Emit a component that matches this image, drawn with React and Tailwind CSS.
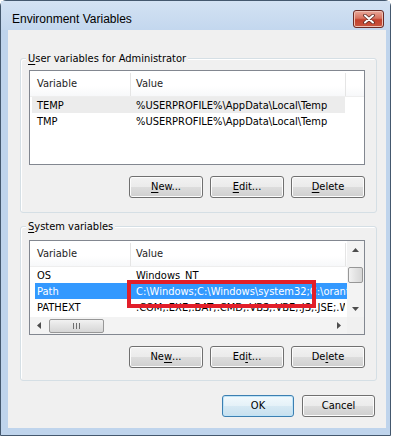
import React from 'react';

const UI_FONT = "font-['DejaVu_Sans_Condensed','Liberation_Sans',sans-serif] text-[11px]";

function Mn({ children }) {
  return <span className="underline decoration-1 underline-offset-[2px]">{children}</span>;
}

function Button({ children, isDefault, width = 'w-[74px]' }) {
  return (
    <div
      className={
        isDefault
          ? `${width} flex h-[22px] items-center justify-center rounded-[3px] border border-[#3c7fb1] bg-[linear-gradient(#f2f9fd,#e4f1f8_50%,#d6e9f4_50%,#c8e0ee)] text-black shadow-[inset_0_0_0_1px_#bfe3f7]`
          : `${width} flex h-[22px] items-center justify-center rounded-[3px] border border-[#707070] bg-[linear-gradient(#f2f2f2,#ebebeb_50%,#dddddd_50%,#cfcfcf)] text-black shadow-[inset_0_0_0_1px_#fcfcfc]`
      }
    >
      {children}
    </div>
  );
}

function Arrow({ dir }) {
  const pts = {
    up: '0,4 7,4 3.5,0',
    down: '0,0 7,0 3.5,4',
    left: '4,0 4,7 0,3.5',
    right: '0,0 0,7 4,3.5',
  }[dir];
  const vertical = dir === 'up' || dir === 'down';
  return (
    <svg width={vertical ? 7 : 4} height={vertical ? 4 : 7} viewBox={vertical ? '0 0 7 4' : '0 0 4 7'}>
      <polygon points={pts} fill="#4d4d4d" />
    </svg>
  );
}

function Header({ filler }) {
  return (
    <div className="flex h-[26px] shrink-0 items-center border-b border-[#eeeeee] bg-[linear-gradient(#ffffff,#ffffff_60%,#f7f8fa)] pt-[2px] text-[#1e1e1e]">
      <div className="w-[100px] pl-[7px]">Variable</div>
      <div className="h-full w-px bg-[#e5e5e5]" />
      <div className="w-[214px] pl-[5px]">Value</div>
      <div className="h-full w-px bg-[#e5e5e5]" />
      {filler && <div className="flex-1" />}
    </div>
  );
}

function Row({ name, value, state }) {
  const bg =
    state === 'selected'
      ? 'ml-[5px] bg-[#3399ff] text-white'
      : state === 'hover'
        ? 'ml-[2px] bg-[#ececec] text-black'
        : 'ml-[2px] text-black';
  return (
    <div className="flex h-[16px] shrink-0">
      <div className={`flex w-[313px] items-center overflow-hidden whitespace-nowrap pt-[2px] ${bg}`}>
        <div className={state === 'selected' ? 'w-[95px] shrink-0 pl-[2px]' : 'w-[98px] shrink-0 pl-[5px]'}>{name}</div>
        <div className="shrink-0 pl-[6px]">{value}</div>
      </div>
    </div>
  );
}

function UserList() {
  return (
    <div className="flex h-[95px] w-[336px] flex-col overflow-hidden border border-[#828790] bg-white">
      <Header filler />
      <Row name="TEMP" value="%USERPROFILE%\AppData\Local\Temp" state="hover" />
      <Row name="TMP" value="%USERPROFILE%\AppData\Local\Temp" />
    </div>
  );
}

function SystemList() {
  return (
    <div className="relative flex h-[95px] w-[336px] flex-col overflow-hidden border border-[#828790] bg-white">
      <div className="flex min-h-0 flex-1">
        <div className="flex min-w-0 flex-1 flex-col overflow-hidden">
          <Header />
          <Row name="OS" value="Windows_NT" />
          <Row name="Path" value="C:\Windows;C:\Windows\system32;C:\orant\bin;C:\Windows\System32\Wbem" state="selected" />
          <Row name="PATHEXT" value=".COM;.EXE;.BAT;.CMD;.VBS;.VBE;.JS;.JSE;.WSF;.WSH;.MSC" />
        </div>
        {/* vertical scrollbar */}
        <div className="flex w-[17px] shrink-0 flex-col items-center bg-[#f3f3f3]">
          <div className="flex h-[17px] w-full items-center justify-center">
            <Arrow dir="up" />
          </div>
          <div className="mt-[9px] h-[16px] w-[15px] rounded-[2px] border border-[#979797] bg-[linear-gradient(90deg,#f2f2f2,#e3e3e3_50%,#d6d6d6)]" />
          <div className="flex-1" />
          <div className="flex h-[17px] w-full items-center justify-center">
            <Arrow dir="down" />
          </div>
        </div>
      </div>
      {/* horizontal scrollbar */}
      <div className="flex h-[17px] shrink-0">
        <div className="flex flex-1 items-center bg-[#f3f3f3]">
          <div className="flex h-full w-[17px] items-center justify-center">
            <Arrow dir="left" />
          </div>
          <div className="ml-[2px] flex h-[14px] w-[55px] items-center justify-center rounded-[2px] border border-[#979797] bg-[linear-gradient(#f2f2f2,#e3e3e3_50%,#d6d6d6)]">
            <svg width="7" height="6" viewBox="0 0 7 6">
              <path d="M0.5 0v6M3.5 0v6M6.5 0v6" stroke="#6f6f6f" strokeWidth="1" />
            </svg>
          </div>
          <div className="flex-1" />
          <div className="flex h-full w-[17px] items-center justify-center">
            <Arrow dir="right" />
          </div>
        </div>
        <div className="w-[17px] bg-[#f0f0f0]" />
      </div>
      {/* annotation box */}
      <div className="absolute left-[97px] top-[39px] h-[28px] w-[189px] border-[4px] border-[#e21f2a]" />
    </div>
  );
}

function Group({ label, children, pt, pb }) {
  return (
    <div className={`relative w-[357px] rounded-[3px] border border-[#d5dfe5] pl-[8px] pr-[11px] shadow-[inset_1px_1px_0_#ffffff] ${pt} ${pb}`}>
      <span className="absolute left-[5px] top-[-7px] bg-[#f0f0f0] px-[2px] leading-[13px] text-black">{label}</span>
      {children}
    </div>
  );
}

export default function App() {
  return (
    <div className={`h-[436px] w-[394px] bg-white ${UI_FONT}`}>
      <div className="flex h-[436px] w-[391px] flex-col rounded-t-[6px] border-x border-b border-t border-[#44586e] bg-[#bfd4ec]">
        {/* title bar */}
        <div className="flex h-[29px] shrink-0 items-start justify-between bg-[linear-gradient(#d3e2f3,#c3d7ee)] pl-[11px] pr-[6px]">
          <span className="mt-[11px] font-['Liberation_Sans',sans-serif] text-[12px] leading-[14px] text-black">Environment Variables</span>
          <div className="mt-[9px] flex h-[18px] w-[31px] items-center justify-center rounded-[3px] border border-[#6b2a24] bg-[linear-gradient(#e9a99b,#d7735f_45%,#c2402c_55%,#c9563f)] shadow-[inset_0_0_0_1px_#eec0b4]">
            <svg width="12" height="10" viewBox="0 0 12 10">
              <path d="M2 1.5l8 7M10 1.5l-8 7" stroke="#5a2a24" strokeWidth="3.6" strokeLinecap="round" />
              <path d="M2 1.5l8 7M10 1.5l-8 7" stroke="#ffffff" strokeWidth="2" strokeLinecap="round" />
            </svg>
          </div>
        </div>

        {/* client area */}
        <div className="ml-[7px] flex h-[398px] w-[378px] shrink-0 flex-col bg-[#f0f0f0] pl-[12px]">
          <div className="mt-[28px]">
            <Group
              label={<><Mn>U</Mn>ser variables for Administrator</>}
              pt="pt-[11px]"
              pb="pb-[14px]"
            >
              <UserList />
              <div className="mt-[11px] flex justify-end gap-[7px]">
                <Button><Mn>N</Mn>ew...</Button>
                <Button><Mn>E</Mn>dit...</Button>
                <Button><Mn>D</Mn>elete</Button>
              </div>
            </Group>
          </div>

          <div className="mt-[13px]">
            <Group label={<><Mn>S</Mn>ystem variables</>} pt="pt-[13px]" pb="pb-[12px]">
              <SystemList />
              <div className="mt-[11px] flex justify-end gap-[7px]">
                <Button>Ne<Mn>w</Mn>...</Button>
                <Button>Ed<Mn>i</Mn>t...</Button>
                <Button>De<Mn>l</Mn>ete</Button>
              </div>
            </Group>
          </div>

          <div className="mt-[14px] flex justify-end gap-[8px] pr-[11px]">
            <Button isDefault width="w-[72px]">OK</Button>
            <Button width="w-[73px]">Cancel</Button>
          </div>
        </div>
      </div>
    </div>
  );
}
